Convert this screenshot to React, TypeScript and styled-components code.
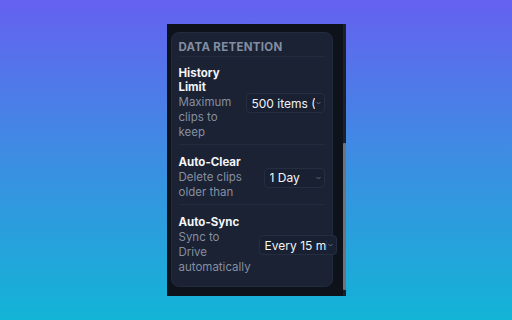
import React from 'react'
import styled, { createGlobalStyle } from 'styled-components'

const GlobalStyle = createGlobalStyle`
  html, body {
    margin: 0;
    height: 100%;
  }
  body {
    background: linear-gradient(180deg, #6561f0 0%, #3c8ee2 50%, #12b4d6 100%);
    font-family: Inter, 'Noto Sans', sans-serif;
    -webkit-font-smoothing: antialiased;
  }
`

const Stage = styled.div`
  height: 100vh;
  display: flex;
  align-items: center;
  justify-content: center;
`

const Popup = styled.div`
  width: 179px;
  height: 272px;
  display: flex;
  background: #0e121b;
  overflow: hidden;
`

const Viewport = styled.div`
  flex: 1;
  min-width: 0;
  padding: 8px 10px 7px 4px;
`

const Card = styled.section`
  background: #1a2233;
  border: 1px solid #232c3e;
  border-radius: 8px;
  padding: 7px 7px 0;
`

const SectionTitle = styled.h2`
  margin: 0;
  padding: 0 0 2px;
  font-size: 11.5px;
  line-height: 14px;
  font-weight: 700;
  letter-spacing: 0.3px;
  text-transform: uppercase;
  color: #838da0;
  border-bottom: 1px solid #232c3e;
`

const Row = styled.div`
  display: flex;
  align-items: center;
  gap: 8px;
  padding: 9px 0 4px;

  & + & {
    border-top: 1px solid #232c3e;
    padding-top: 10px;
  }
  &:last-child {
    padding-bottom: 11px;
  }
`

const Label = styled.div`
  flex: 1;
`

const Name = styled.div`
  font-size: 11.5px;
  line-height: 14px;
  font-weight: 700;
  color: #f3f5f8;
`

const Hint = styled.div`
  margin-top: 1px;
  font-size: 11.5px;
  line-height: 15px;
  color: #858fa1;
`

const SelectBox = styled.div<{ $w: number }>`
  position: relative;
  flex-shrink: 0;
  width: ${(p) => p.$w}px;
`

const Select = styled.select`
  appearance: none;
  display: block;
  width: 100%;
  height: 20px;
  padding: 0 9px 0 5px;
  background: #182031;
  border: 1px solid #252e41;
  border-radius: 4px;
  color: #f1f3f6;
  font-family: inherit;
  font-size: 12px;
  outline: none;
`

const Chevron = styled.svg`
  position: absolute;
  right: 4px;
  top: 8px;
  width: 5px;
  height: 4px;
  pointer-events: none;
`

const ScrollTrack = styled.div`
  width: 3px;
  display: flex;
  flex-direction: column;
  justify-content: flex-end;
  padding-bottom: 6px;
  background: #1d2026;
`

const ScrollThumb = styled.div`
  height: 147px;
  background: #6f737a;
  border-radius: 1px;
`

type Setting = {
  name: string
  hint: string
  value: string
  options: string[]
  width: number
}

const settings: Setting[] = [
  {
    name: 'History Limit',
    hint: 'Maximum clips to keep',
    value: '500 items (Recommended)',
    options: ['100 items', '500 items (Recommended)', '1000 items'],
    width: 79,
  },
  {
    name: 'Auto-Clear',
    hint: 'Delete clips older than',
    value: '1 Day',
    options: ['1 Day', '7 Days', '30 Days', 'Never'],
    width: 61,
  },
  {
    name: 'Auto-Sync',
    hint: 'Sync to Drive automatically',
    value: 'Every 15 minutes',
    options: ['Every 5 minutes', 'Every 15 minutes', 'Every hour', 'Off'],
    width: 78,
  },
]

const Dropdown = ({ value, options, width }: Setting) => (
  <SelectBox $w={width}>
    <Select defaultValue={value}>
      {options.map((o) => (
        <option key={o}>{o}</option>
      ))}
    </Select>
    <Chevron viewBox='0 0 5 4'>
      <path d='M0.5 1 L2.5 3 L4.5 1' fill='none' stroke='#6b7385' strokeWidth='0.9' />
    </Chevron>
  </SelectBox>
)

export default function App() {
  return (
    <>
      <GlobalStyle />
      <Stage>
        <Popup>
          <Viewport>
            <Card>
              <SectionTitle>Data Retention</SectionTitle>
              {settings.map((s) => (
                <Row key={s.name}>
                  <Label>
                    <Name>{s.name}</Name>
                    <Hint>{s.hint}</Hint>
                  </Label>
                  <Dropdown {...s} />
                </Row>
              ))}
            </Card>
          </Viewport>
          <ScrollTrack>
            <ScrollThumb />
          </ScrollTrack>
        </Popup>
      </Stage>
    </>
  )
}
